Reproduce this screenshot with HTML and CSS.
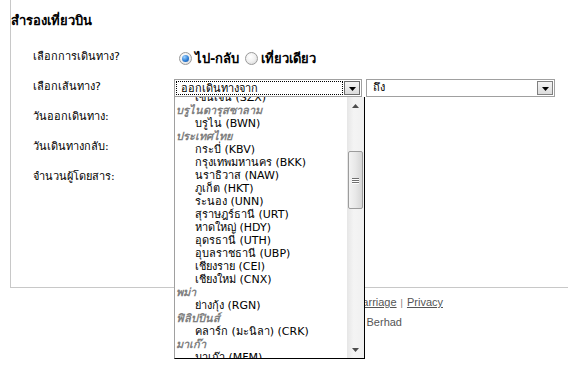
FILE: index.html
```html
<!DOCTYPE html>
<html lang="th">
<head>
<meta charset="utf-8">
<title>สำรองเที่ยวบิน</title>
<link rel="stylesheet" href="styles.css">
</head>
<body>
<div class="panel">
  <h2 class="title">สำรองเที่ยวบิน</h2>
  <div class="form">
    <div class="label">เลือกการเดินทาง?</div>
    <div class="ctrl radios">
      <label class="radio"><span class="dot checked"></span>ไป-กลับ</label>
      <label class="radio"><span class="dot"></span>เที่ยวเดียว</label>
    </div>

    <div class="label">เลือกเส้นทาง?</div>
    <div class="ctrl selects">
      <div class="select from">
        <span class="val focus">ออกเดินทางจาก</span>
        <span class="btn"><svg width="7" height="4" viewBox="0 0 7 4"><polygon points="0,0 7,0 3.5,4" fill="#000"/></svg></span>
      </div>
      <div class="select to">
        <span class="val">ถึง</span>
        <span class="btn"><svg width="7" height="4" viewBox="0 0 7 4"><polygon points="0,0 7,0 3.5,4" fill="#000"/></svg></span>
      </div>
      <div class="list">
        <div class="items">
          <div class="opt">เซินเจิ้น (SZX)</div>
          <div class="grp">บรูไนดารุสซาลาม</div>
          <div class="opt">บรูไน (BWN)</div>
          <div class="grp">ประเทศไทย</div>
          <div class="opt">กระบี่ (KBV)</div>
          <div class="opt">กรุงเทพมหานคร (BKK)</div>
          <div class="opt">นราธิวาส (NAW)</div>
          <div class="opt">ภูเก็ต (HKT)</div>
          <div class="opt">ระนอง (UNN)</div>
          <div class="opt">สุราษฎร์ธานี (URT)</div>
          <div class="opt">หาดใหญ่ (HDY)</div>
          <div class="opt">อุดรธานี (UTH)</div>
          <div class="opt">อุบลราชธานี (UBP)</div>
          <div class="opt">เชียงราย (CEI)</div>
          <div class="opt">เชียงใหม่ (CNX)</div>
          <div class="grp">พม่า</div>
          <div class="opt">ย่างกุ้ง (RGN)</div>
          <div class="grp">ฟิลิปปินส์</div>
          <div class="opt">คลาร์ก (มะนิลา) (CRK)</div>
          <div class="grp">มาเก๊า</div>
          <div class="opt">มาเก๊า (MFM)</div>
        </div>
        <div class="scrollbar">
          <div class="arrow up"><svg width="7" height="4" viewBox="0 0 7 4"><polygon points="0,4 7,4 3.5,0" fill="#4d4d4d"/></svg></div>
          <div class="track">
            <div class="thumb"><span class="grip"></span><span class="grip"></span><span class="grip"></span></div>
          </div>
          <div class="arrow down"><svg width="7" height="4" viewBox="0 0 7 4"><polygon points="0,0 7,0 3.5,4" fill="#4d4d4d"/></svg></div>
        </div>
      </div>
    </div>

    <div class="label">วันออกเดินทาง:</div>
    <div class="ctrl"></div>

    <div class="label">วันเดินทางกลับ:</div>
    <div class="ctrl"></div>

    <div class="label">จำนวนผู้โดยสาร:</div>
    <div class="ctrl"></div>
  </div>
</div>
<div class="footer">
  <div class="line"><a href="#">Terms &amp; Conditions of Carriage</a><span class="sep">|</span><a href="#">Privacy</a></div>
  <div class="line second">Copyright © 2011 AirAsia Berhad</div>
</div>
</body>
</html>
```

FILE: styles.css
```css
* { box-sizing: border-box; }

html, body {
  margin: 0;
  background: #fff;
}

body {
  width: 568px;
  height: 377px;
  overflow: hidden;
  font-family: Tahoma, "DejaVu Sans", sans-serif;
  font-size: 11px;
  color: #000;
}

.panel {
  margin-left: 10px;
  height: 288px;
  border-left: 1px solid #c8c8c8;
  border-bottom: 1px solid #c8c8c8;
  padding-top: 13px;
}

.title {
  margin: 0;
  font-size: 13px;
  font-weight: bold;
  line-height: 16px;
}

.form {
  margin-top: 12px;
  display: grid;
  grid-template-columns: 163px 1fr;
  grid-auto-rows: 30px;
}

.label {
  padding-left: 22px;
  display: flex;
  align-items: center;
}

.ctrl {
  display: flex;
  align-items: center;
}

.radios {
  padding-top: 4px;
  padding-left: 5px;
  gap: 6px;
  font-weight: bold;
  font-size: 13px;
}

.radio {
  display: flex;
  align-items: center;
  gap: 3px;
}

.dot {
  width: 13px;
  height: 13px;
  border-radius: 50%;
  border: 1px solid #9a9a9a;
  background: radial-gradient(circle at 40% 35%, #fff 0, #f0f0f0 50%, #d0d0d0 100%);
  position: relative;
}

.dot.checked::after {
  content: "";
  position: absolute;
  left: 2px;
  top: 2px;
  width: 7px;
  height: 7px;
  border-radius: 50%;
  background: radial-gradient(circle at 35% 30%, #9fd3ff 0, #2f7fd6 55%, #0d4f9e 100%);
}

.selects {
  position: relative;
  align-items: flex-start;
  padding-top: 8px;
  gap: 4px;
}

.select {
  height: 18px;
  border: 1px solid #a0a0a0;
  background: #fff;
  display: flex;
  align-items: center;
  padding: 1px;
}

.select.from { width: 188px; }
.select.to { width: 189px; }

.val {
  flex: 1;
  height: 14px;
  line-height: 13px;
  padding-left: 4px;
  font-size: 11px;
}

.val.focus {
  border: 1px dotted #000;
  padding-left: 4px;
}

.select.to .val { padding-left: 5px; }

.btn {
  width: 16px;
  height: 14px;
  margin-left: 1px;
  border: 1px solid #808080;
  background: linear-gradient(#f4f4f4, #dcdcdc);
  display: flex;
  align-items: center;
  justify-content: center;
  padding-top: 1px;
}

.select.from .btn {
  border-color: #6a6a6a;
}

.list {
  position: absolute;
  left: 0;
  top: 26px;
  width: 191px;
  height: 262px;
  background: #fff;
  border-left: 1px solid #a0a0a0;
  border-right: 1px solid #000;
  border-bottom: 1px solid #000;
  display: flex;
  overflow: hidden;
  z-index: 2;
}

.items {
  flex: 1;
  margin-top: -6px;
  overflow: hidden;
}

.opt, .grp {
  height: 13px;
  line-height: 13px;
  white-space: nowrap;
  font-size: 11px;
}

.opt {
  padding-left: 20px;
}

.grp {
  padding-left: 1px;
  font-weight: bold;
  font-style: italic;
  color: #808080;
}

.scrollbar {
  width: 17px;
  display: flex;
  flex-direction: column;
  background: linear-gradient(90deg, #e6e6e6, #f4f4f4 40%, #f0f0f0);
}

.arrow {
  height: 17px;
  display: flex;
  align-items: center;
  justify-content: center;
}

.track {
  flex: 1;
  padding-top: 37px;
}

.thumb {
  margin: 0 1px;
  height: 58px;
  border: 1px solid #9c9c9c;
  border-radius: 2px;
  background: linear-gradient(90deg, #f3f3f3, #e8e8e8 50%, #d6d6d6);
  display: flex;
  flex-direction: column;
  align-items: center;
  justify-content: center;
  gap: 1px;
}

.grip {
  width: 7px;
  height: 1px;
  background: #6f6f6f;
  box-shadow: 0 1px 0 #fff;
}

.footer {
  width: 443px;
  padding-top: 5px;
  display: flex;
  flex-direction: column;
  align-items: flex-end;
  font-family: "Liberation Sans", Arial, sans-serif;
  font-size: 11px;
  line-height: 19px;
  color: #555;
}

.footer a {
  color: #555;
  text-decoration: underline;
}

.sep {
  font-size: 9px;
  margin: 0 4px;
  color: #777;
}

.line.second {
  margin-right: 41px;
}
```
